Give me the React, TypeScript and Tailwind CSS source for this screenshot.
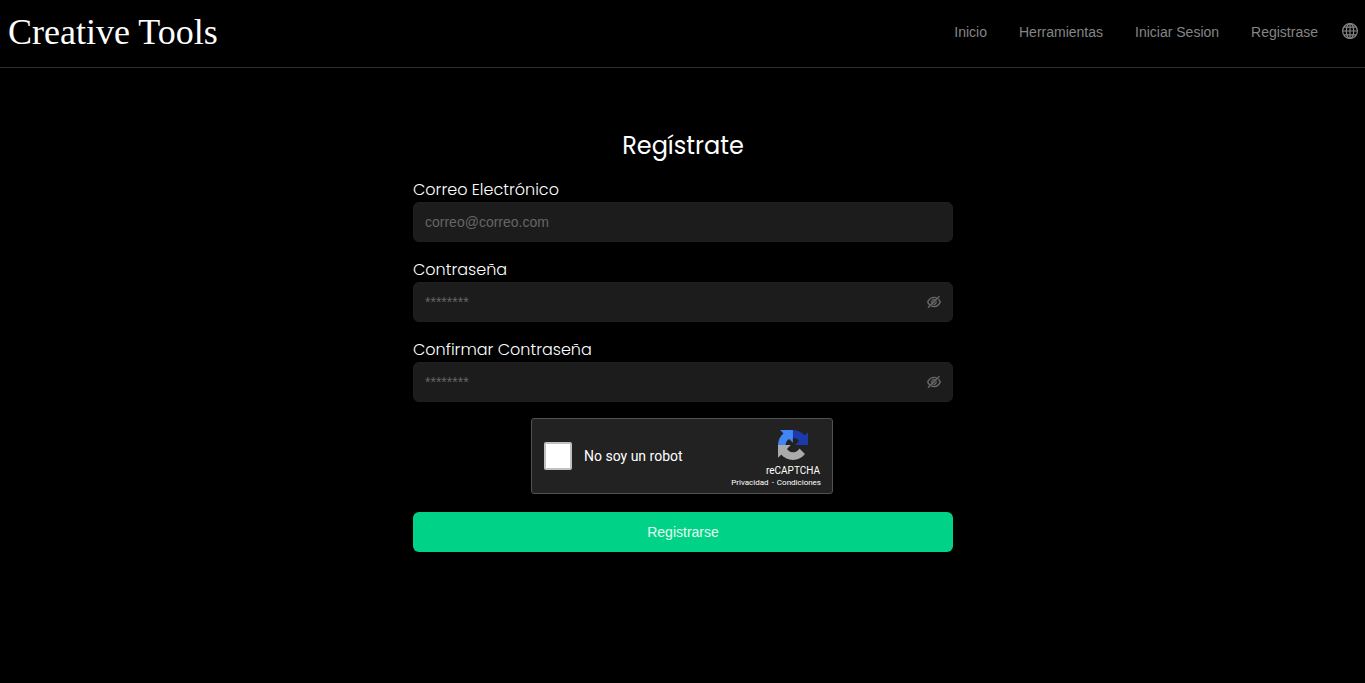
import { useState } from "react";
import { AiOutlineEyeInvisible, AiOutlineEye } from "react-icons/ai";

const links = ["Inicio", "Herramientas", "Iniciar Sesion", "Registrase"];

function GlobeIcon() {
  return (
    <svg viewBox="0 0 16 16" className="size-4" fill="none" stroke="currentColor" strokeWidth="1.2" aria-hidden="true">
      <circle cx="8" cy="8" r="7.4" />
      <ellipse cx="8" cy="8" rx="3.7" ry="7.4" />
      <path d="M8 .6v14.8M.6 8h14.8M1.8 4.2h12.4M1.8 11.8h12.4" />
    </svg>
  );
}

function RecaptchaLogo() {
  return (
    <svg viewBox="0 0 64 64" className="size-[30px]" aria-hidden="true">
      <path fill="#1c3aa9" d="M64 31.955l-.033-1.37V4.687l-7.16 7.16C50.948 4.674 42.033.093 32.05.093c-10.4 0-19.622 4.96-25.458 12.64l11.736 11.86a15.55 15.55 0 0 1 4.754-5.334c2.05-1.6 4.952-2.906 8.968-2.906.485 0 .86.057 1.135.163 4.976.393 9.288 3.14 11.828 7.124l-8.307 8.307L64 31.953" />
      <path fill="#4285f4" d="M31.862.094l-1.37.033H4.594l7.16 7.16C4.58 13.147 0 22.06 0 32.046c0 10.4 4.96 19.622 12.64 25.458L24.5 45.768a15.55 15.55 0 0 1-5.334-4.754c-1.6-2.05-2.906-4.952-2.906-8.968 0-.485.057-.86.163-1.135.393-4.976 3.14-9.288 7.124-11.828l8.307 8.307L31.86.095" />
      <path fill="#ababab" d="M.001 32.045l.033 1.37v25.898l7.16-7.16c5.86 7.173 14.774 11.754 24.76 11.754 10.4 0 19.622-4.96 25.458-12.64l-11.736-11.86a15.55 15.55 0 0 1-4.754 5.334c-2.05 1.6-4.952 2.906-8.968 2.906-.485 0-.86-.057-1.135-.163-4.976-.393-9.288-3.14-11.828-7.124l8.307-8.307c-10.522.04-22.4.066-27.295-.005" />
    </svg>
  );
}

type FieldProps = { id: string; label: string; placeholder: string; secret?: boolean };

function Field({ id, label, placeholder, secret = false }: FieldProps) {
  const [visible, setVisible] = useState(false);
  return (
    <div className="flex flex-col">
      <label htmlFor={id} className="font-[Poppins,Inter,sans-serif] text-base leading-6 font-light">
        {label}
      </label>
      <div className="flex h-10 items-center gap-2 rounded-md border border-[#1f1f1f] bg-[#1c1c1c] pr-2.5 pl-[11px]">
        <input
          id={id}
          type={secret && !visible ? "password" : "text"}
          placeholder={placeholder}
          className="min-w-0 flex-1 bg-transparent text-sm outline-none placeholder:text-[#666666]"
        />
        {secret && (
          <button type="button" aria-label="Mostrar contraseña" onClick={() => setVisible(!visible)} className="text-[#6b6b6b]">
            {visible ? <AiOutlineEye className="size-4" /> : <AiOutlineEyeInvisible className="size-4 stroke-current stroke-[20px]" />}
          </button>
        )}
      </div>
    </div>
  );
}

function Recaptcha() {
  return (
    <div className="h-[78px] w-[304px] self-center pr-0.5 pb-0.5">
      <div className="flex h-full justify-between rounded-[3px] border border-[#525252] bg-[#222222] pr-[11px] pl-3 font-[Roboto,sans-serif]">
        <div className="flex items-center gap-3">
          <input id="robot" type="checkbox" className="size-7 appearance-none rounded-xs border-2 border-[#c1c1c1] bg-white checked:bg-[#00d287]" />
          <label htmlFor="robot" className="text-sm leading-4">
            No soy un robot
          </label>
        </div>
        <div className="flex flex-col items-end pt-[11px]">
          <div className="flex flex-col items-center pr-px">
            <RecaptchaLogo />
            <span className="pt-[5px] text-[10px] leading-3">reCAPTCHA</span>
          </div>
          <div className="flex gap-[3px] text-[8px] leading-3">
            <a href="#privacidad">Privacidad</a>
            <span>-</span>
            <a href="#condiciones">Condiciones</a>
          </div>
        </div>
      </div>
    </div>
  );
}

export default function App() {
  return (
    <div className="min-h-screen bg-black font-[Liberation_Sans,Arial,sans-serif] text-white">
      <header className="flex h-[68px] items-center justify-between border-b border-[#2d2d2d] pr-[7px] pb-1 pl-2">
        <a href="#inicio" className="font-[Liberation_Serif,serif] text-4xl">
          Creative Tools
        </a>
        <nav className="flex items-center gap-8 text-sm text-[#858585]">
          {links.map((link) => (
            <a key={link} href="#menu">
              {link}
            </a>
          ))}
          <button type="button" aria-label="Idioma" className="-ml-2 pb-0.5">
            <GlobeIcon />
          </button>
        </nav>
      </header>
      <main className="pt-[62px] pl-px">
        <form className="mx-auto flex max-w-[540px] flex-col gap-4" onSubmit={(event) => event.preventDefault()}>
          <h1 className="text-center font-[Poppins,Inter,sans-serif] text-2xl leading-8">Regístrate</h1>
          <Field id="correo" label="Correo Electrónico" placeholder="correo@correo.com" />
          <Field id="clave" label="Contraseña" placeholder="********" secret />
          <Field id="confirmar" label="Confirmar Contraseña" placeholder="********" secret />
          <Recaptcha />
          <button type="submit" className="h-10 rounded-md bg-[#00d287] text-sm text-white/90">
            Registrarse
          </button>
        </form>
      </main>
    </div>
  );
}
